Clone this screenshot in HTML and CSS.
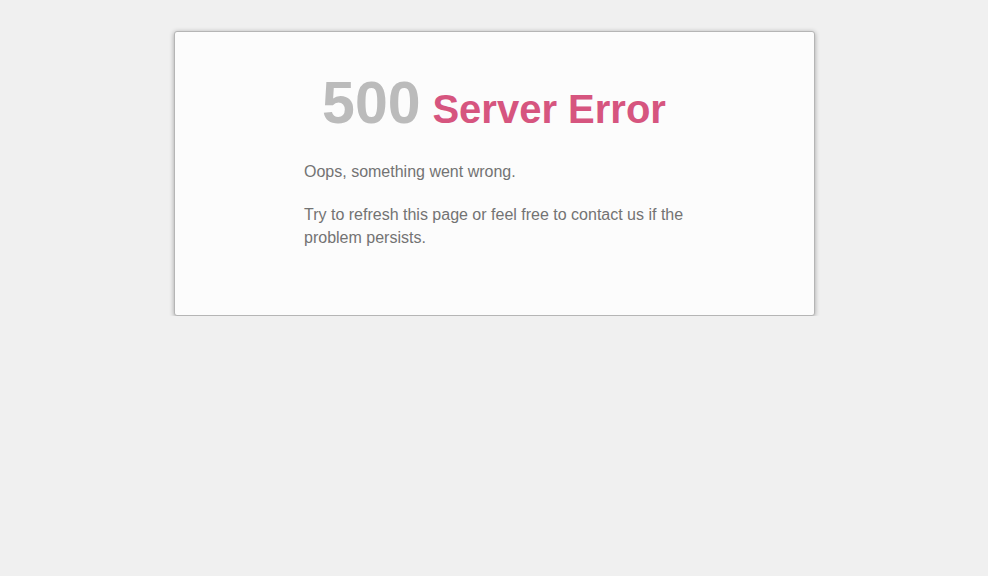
FILE: index.html
```html
<!DOCTYPE html>
<html lang="en">
<head>
<meta charset="utf-8">
<title>500 Server Error</title>
<link rel="stylesheet" href="styles.css">
</head>
<body>
<div class="card">
  <h1 class="title"><span class="code">500</span> <span class="label">Server Error</span></h1>
  <div class="message">
    <p>Oops, something went wrong.</p>
    <p>Try to refresh this page or feel free to contact us if the problem persists.</p>
  </div>
</div>
</body>
</html>
```

FILE: styles.css
```css
html, body {
  margin: 0;
  padding: 0;
}
body {
  background: #f0f0f0;
  font-family: "Liberation Sans", Arial, sans-serif;
  color: #737373;
  padding-top: 31px;
}
.card {
  width: 641px;
  height: 285px;
  box-sizing: border-box;
  margin: 0 auto;
  background: #fcfcfc;
  border: 1px solid #b5b5b5;
  border-radius: 3px;
  box-shadow: 0 1px 5px rgba(0,0,0,0.33);
  padding: 36px 0 0;
}
.title {
  margin: 0;
  text-align: center;
  font-weight: bold;
  line-height: 70px;
}
.code {
  font-size: 59px;
  color: #bbbbbb;
  margin-right: 3px;
}
.label {
  font-size: 40px;
  color: #d6557f;
}
.message {
  width: 380px;
  margin: 13px auto 0;
  font-size: 16px;
  line-height: 23px;
}
.message p {
  margin: 0 0 20px;
}
```
